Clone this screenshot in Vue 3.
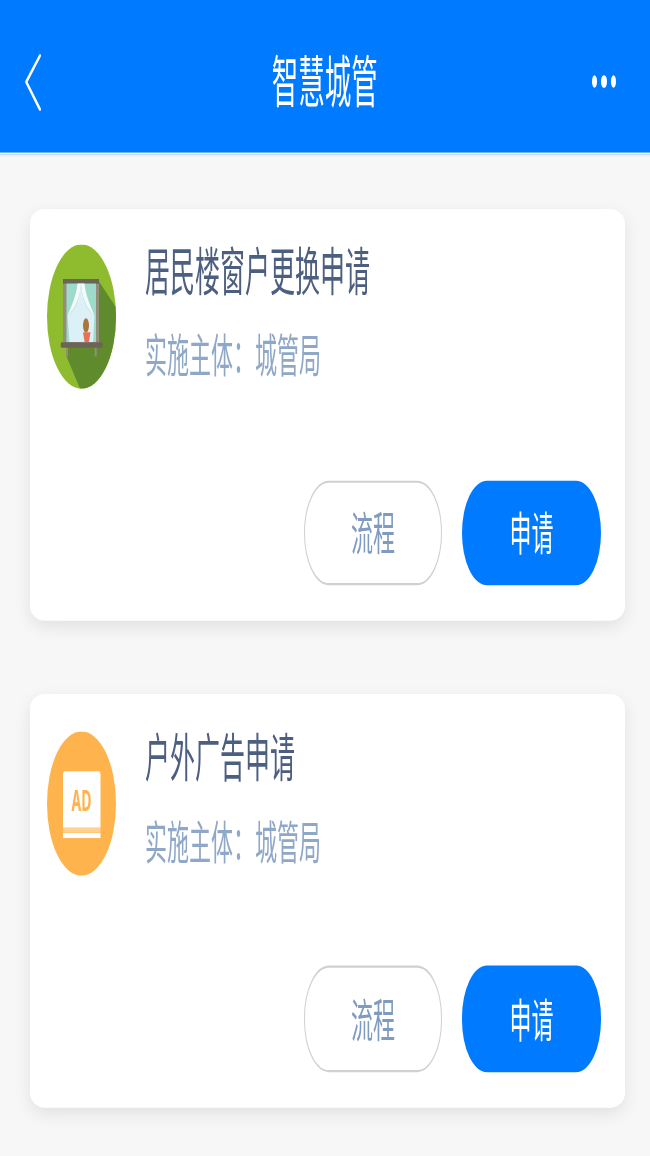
<template>
    <div class="stage">
        <div class="page">
            <header class="nav-bar">
                <svg class="back-icon" viewBox="0 0 16 27" width="16" height="27">
                    <path d="M15 0.6 L1.2 13.2 L15 26.4" fill="none" stroke="#fff" stroke-width="1.9" stroke-linecap="round" stroke-linejoin="round" />
                </svg>
                <h1 class="nav-title">智慧城管</h1>
                <div class="more-icon">
                    <span></span>
                    <span></span>
                    <span></span>
                </div>
            </header>

            <main class="card-list">
                <section v-for="item in items" :key="item.id" class="card">
                    <div class="card-top">
                        <svg v-if="item.icon === 'window'" class="card-icon" viewBox="0 0 69 69" width="69" height="69">
                            <defs>
                                <clipPath id="window-clip">
                                    <circle cx="34.5" cy="34.5" r="34.5" />
                                </clipPath>
                            </defs>
                            <circle cx="34.5" cy="34.5" r="34.5" fill="#8fbc2f" />
                            <path d="M51 17 L69 30 L69 69 L33 69 L19 53 L19 47 L51 47 Z" fill="#5f8b2d" clip-path="url(#window-clip)" />
                            <rect x="16" y="16.5" width="36" height="31" fill="#938e7a" />
                            <rect x="16" y="16.5" width="36" height="2.2" fill="#66665a" />
                            <rect x="19.5" y="18.7" width="29.5" height="28" fill="#9edac9" />
                            <path d="M34 18.7 C33 26 28 32 20.5 34 L22.5 46.7 L46 46.7 L47.5 34 C40 32 35 26 34 18.7 Z" fill="#dcf0f8" />
                            <path d="M30.5 18.7 L34 18.7 C33 26 28 31 20.5 34 C25 29 29.5 24 30.5 18.7 Z" fill="#f4fafb" />
                            <path d="M37.5 18.7 L34 18.7 C35 26 40 31 47.5 34 C43 29 38.5 24 37.5 18.7 Z" fill="#f4fafb" />
                            <ellipse cx="39" cy="38.7" rx="3" ry="3.4" fill="#a9763a" />
                            <path d="M36 42 L43.6 42 L41.8 46.7 L37.6 46.7 Z" fill="#e8705a" />
                            <rect x="13.7" y="46.7" width="42" height="2.7" rx="1" fill="#6c6557" />
                            <rect x="19" y="49.4" width="2" height="4.2" fill="#938e7a" />
                            <rect x="47.7" y="49.4" width="2" height="4.2" fill="#938e7a" />
                        </svg>
                        <svg v-else class="card-icon" viewBox="0 0 69 69" width="69" height="69">
                            <circle cx="34.5" cy="34.5" r="34.5" fill="#ffb34d" />
                            <path d="M16 21 Q16 19 18 19 L51.5 19 Q53.5 19 53.5 21 L53.5 46 L16 46 Z" fill="#fff" />
                            <rect x="16" y="46" width="37.5" height="2.4" fill="#ffd08f" />
                            <rect x="16" y="48.6" width="37.5" height="2.4" fill="#fff" />
                            <text x="34.5" y="38" text-anchor="middle" class="ad-text">AD</text>
                        </svg>
                        <div class="card-info">
                            <div class="card-name">{{ item.name }}</div>
                            <div class="card-sub">{{ subject }}</div>
                        </div>
                    </div>
                    <div class="card-actions">
                        <button class="flow-btn"><span>流程</span></button>
                        <button class="apply-btn"><span>申请</span></button>
                    </div>
                </section>
            </main>
        </div>
    </div>
</template>

<script setup>
const subject = '实施主体\uFF1A城管局'

const items = [
    { id: 1, name: '居民楼窗户更换申请', icon: 'window' },
    { id: 2, name: '户外广告申请', icon: 'ad' }
]
</script>

<style>
html {
    background: #f7f7f7;
    overflow: hidden;
}
</style>

<style scoped>
.stage {
    width: 650px;
    height: 1156px;
    overflow: hidden;
}

/* the shot is stretched vertically, so the page is built flat and scaled */
.page {
    width: 650px;
    height: 553px;
    transform: scaleY(2.09);
    transform-origin: top left;
    will-change: transform;
    background: #f7f7f7;
    font-family: "Noto Sans CJK SC", "Noto Sans", sans-serif;
}

.nav-bar {
    height: 73px;
    background: #007aff;
    border-bottom: 1px solid #fff;
    display: flex;
    align-items: center;
    justify-content: space-between;
    padding: 0 34px 0 25px;
    box-shadow: 0 1px 0 #f0f0f0;
}

.back-icon {
    display: block;
    margin-top: 5px;
}

.nav-title {
    margin: 2px 0 0 17px;
    color: #fff;
    font-size: 26.5px;
    font-weight: 400;
    line-height: 30px;
}

.more-icon {
    display: flex;
    gap: 4px;
    margin-top: 4px;
}

.more-icon span {
    width: 5.5px;
    height: 6px;
    border-radius: 50%;
    background: #fff;
}

.card-list {
    padding: 25.6px 25px 0 30px;
    display: flex;
    flex-direction: column;
    gap: 34.9px;
}

.card {
    height: 197.9px;
    box-sizing: border-box;
    background: #fff;
    border-radius: 15px / 7px;
    padding: 17.4px 24.2px 17.5px 17px;
    box-shadow: 0 3px 12px rgba(0, 0, 0, 0.09);
    display: flex;
    flex-direction: column;
    justify-content: space-between;
}

.card-top {
    display: flex;
}

.card-icon {
    display: block;
    flex-shrink: 0;
}

.ad-text {
    font-family: "Noto Sans", sans-serif;
    font-size: 14px;
    font-weight: 700;
    fill: #ffb34d;
}

.card-info {
    margin-left: 29px;
}

.card-name {
    color: #4c5f80;
    font-size: 25px;
    line-height: 28px;
    margin-top: -2.5px;
}

.card-sub {
    margin-top: 13px;
    color: #8fa8c8;
    font-size: 22px;
    line-height: 26px;
}

.card-actions {
    display: flex;
    justify-content: flex-end;
    gap: 20px;
}

.flow-btn,
.apply-btn {
    width: 138.5px;
    height: 50.3px;
    padding: 0 0 3px;
    border-radius: 25px;
    box-sizing: border-box;
    font-family: inherit;
    font-size: 22px;
    line-height: 26px;
    cursor: pointer;
}

.flow-btn {
    background: #fff;
    color: #7f9cc0;
    border: 1px solid #d0d0d0;
}

.apply-btn {
    background: #007aff;
    color: #fff;
    border: none;
}
</style>
